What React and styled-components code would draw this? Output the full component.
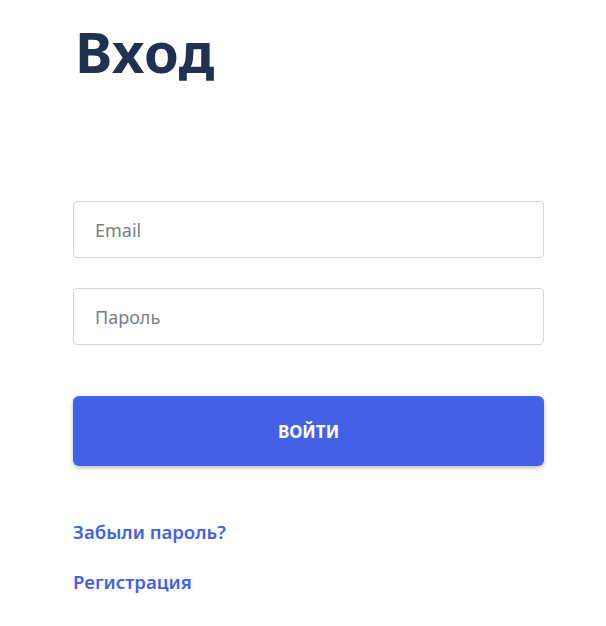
import React from "react";
import styled, { createGlobalStyle } from "styled-components";

const GlobalStyle = createGlobalStyle`
  body {
    margin: 0;
    background: #ffffff;
    font-family: "Noto Sans", "Open Sans", sans-serif;
  }
`;

function App() {
  return (
    <>
      <GlobalStyle />
      <Page>
        <Title>Вход</Title>
        <Form onSubmit={(e) => e.preventDefault()}>
          <Input type="email" placeholder="Email" />
          <Input type="password" placeholder="Пароль" />
          <Submit type="submit">ВОЙТИ</Submit>
        </Form>
        <Links>
          <LinkText href="#">Забыли пароль?</LinkText>
          <LinkText href="#">Регистрация</LinkText>
        </Links>
      </Page>
    </>
  );
}

const Page = styled.div`
  width: 471px;
  padding: 14px 0 0 73px;
`;

const Title = styled.h1`
  margin: 0 0 0 2px;
  font-size: 56px;
  line-height: 74px;
  letter-spacing: 0.6px;
  font-weight: 700;
  color: #20324f;
`;

const Form = styled.form`
  display: flex;
  flex-direction: column;
  margin-top: 113px;
`;

const Input = styled.input`
  box-sizing: border-box;
  width: 100%;
  height: 57px;
  padding: 0 21px;
  border: 1px solid #d4d4d8;
  border-radius: 4px;
  font-family: inherit;
  font-size: 18px;
  font-weight: 400;
  color: #1f2937;
  outline: none;
  margin-bottom: 30px;

  &::placeholder {
    color: #7a7e84;
  }
`;

const Submit = styled.button`
  height: 70px;
  margin-top: 21px;
  border: none;
  border-top: 1px solid #2f74f0;
  border-radius: 6px;
  background: #4361e8;
  color: #ffffff;
  font-family: inherit;
  font-size: 17px;
  font-weight: 700;
  box-shadow: 0 2px 4px rgba(0, 0, 0, 0.25);
  cursor: pointer;
`;

const Links = styled.div`
  display: flex;
  flex-direction: column;
  align-items: flex-start;
  gap: 24px;
  margin-top: 53px;
`;

const LinkText = styled.a`
  font-size: 18.6px;
  line-height: 26px;
  font-weight: 600;
  color: #4361e8;
  text-decoration: none;
`;

export default App;
